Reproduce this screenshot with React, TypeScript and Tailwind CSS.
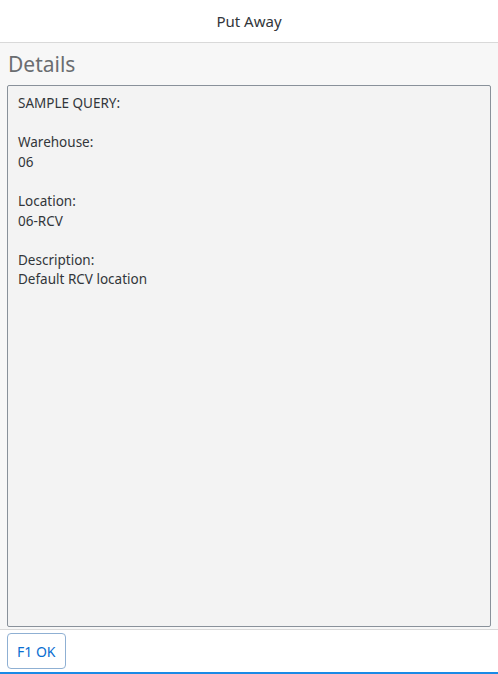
export default function App() {
  const lines = [
    "SAMPLE QUERY:",
    "",
    "Warehouse:",
    "06",
    "",
    "Location:",
    "06-RCV",
    "",
    "Description:",
    "Default RCV location",
  ];
  return (
    <div className="h-[674px] w-[498px] flex flex-col bg-[#f7f7f7] text-[#32363a] font-['Noto_Sans',sans-serif] overflow-hidden">
      <header className="h-[43px] shrink-0 bg-white border-b border-[#d9d9d9] flex items-center justify-center">
        <h1 className="text-[15px] text-[#32363a]">Put Away</h1>
      </header>
      <main className="grow flex flex-col px-[7px] pb-[2px] min-h-0">
        <h2 className="text-[21px] leading-[42px] text-[#6a6d70] pl-[1px]">Details</h2>
        <div className="grow bg-[#f3f3f3] border border-[#89919a] rounded-[2px] px-[10px] pt-[8px] text-[13.5px] leading-[19.6px]">
          {lines.map((l, i) => (
            <div key={i} className="h-[19.6px]">{l}</div>
          ))}
        </div>
      </main>
      <footer className="h-[45px] shrink-0 bg-white border-t border-[#d9d9d9] border-b-2 border-b-[#1a8ae6] flex items-center px-[7px]">
        <button className="h-[36px] px-[9px] rounded-[4px] border border-[#8fb0d3] bg-white text-[#0a6ed1] text-[14px]">
          F1 OK
        </button>
      </footer>
    </div>
  );
}
